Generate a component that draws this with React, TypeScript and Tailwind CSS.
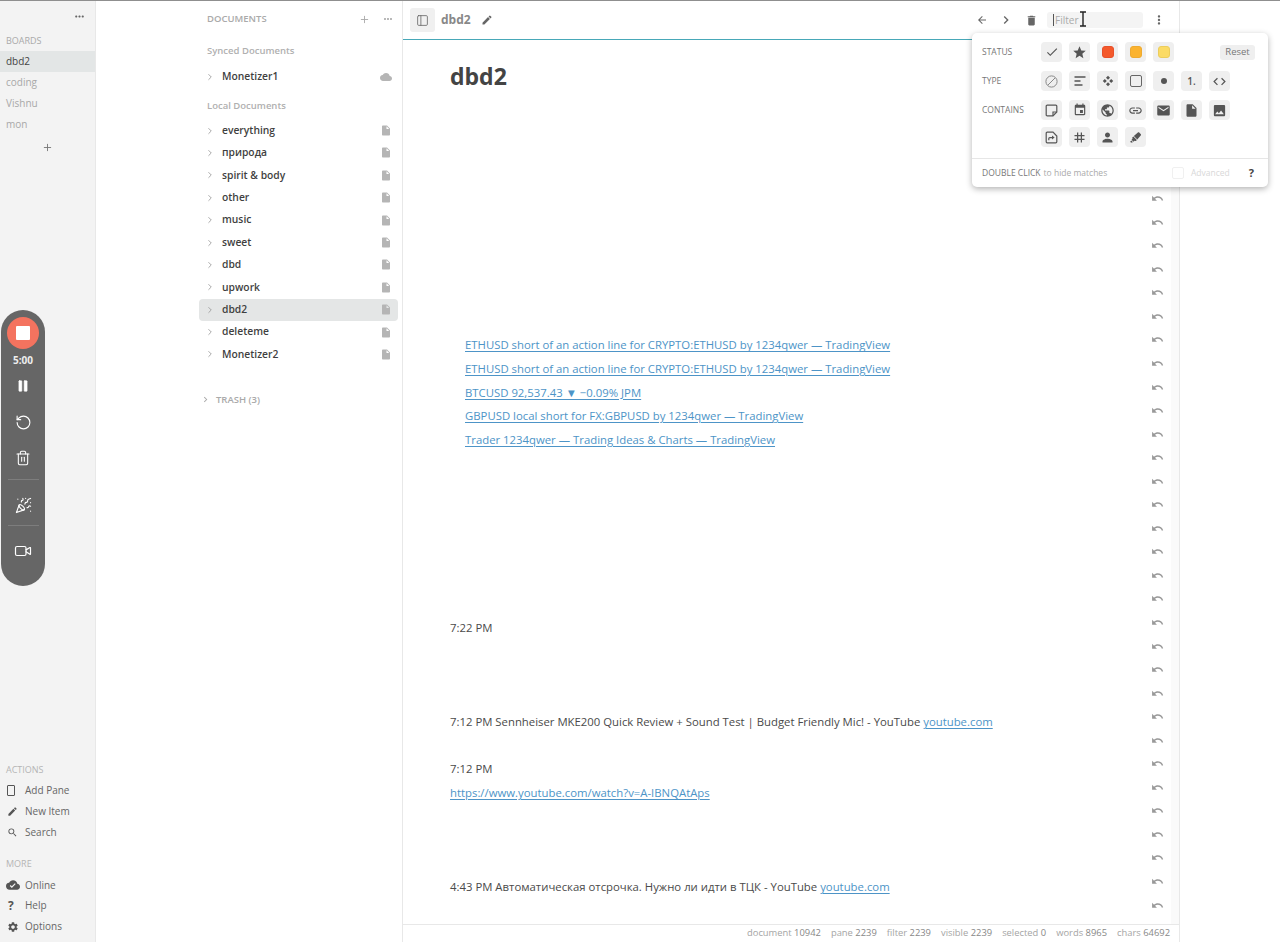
import { type FC, type ReactNode } from 'react';
import { FaHighlighter } from 'react-icons/fa';
import {
    MdCheck, MdCloud, MdCloudDone, MdCode, MdEmail, MdEvent, MdImage, MdInsertDriveFile,
    MdLink, MdMoreVert, MdMoreHoriz, MdPerson, MdPublic, MdSearch, MdSettings,
    MdStar, MdTag, MdUndo, MdEdit, MdDelete, MdChevronRight, MdArrowBack,
} from 'react-icons/md';
import { PanelLeft, Pause, PartyPopper, RotateCcw, Trash2, Video, Plus, ChevronRight } from 'lucide-react';

const boards = ['dbd2', 'coding', 'Vishnu', 'mon'];
const localDocs = ['everything', 'природа', 'spirit & body', 'other', 'music', 'sweet', 'dbd', 'upwork', 'dbd2', 'deleteme', 'Monetizer2'];

const linkClass = 'text-[#4d94c7] underline underline-offset-2';

// row index -> content, everything else is an empty line with only the undo icon
const rows: Record<number, ReactNode> = {
    9: <a className={`ml-[15px] ${linkClass}`}>ETHUSD short of an action line for CRYPTO:ETHUSD by 1234qwer — TradingView</a>,
    10: <a className={`ml-[15px] ${linkClass}`}>ETHUSD short of an action line for CRYPTO:ETHUSD by 1234qwer — TradingView</a>,
    11: <a className={`ml-[15px] ${linkClass}`}>BTCUSD 92,537.43 ▼ −0.09% JPM</a>,
    12: <a className={`ml-[15px] ${linkClass}`}>GBPUSD local short for FX:GBPUSD by 1234qwer — TradingView</a>,
    13: <a className={`ml-[15px] ${linkClass}`}>Trader 1234qwer — Trading Ideas &amp; Charts — TradingView</a>,
    21: <span>7:22 PM</span>,
    25: <span>7:12 PM Sennheiser MKE200 Quick Review + Sound Test | Budget Friendly Mic! - YouTube <a className={linkClass}>youtube.com</a></span>,
    27: <span>7:12 PM</span>,
    28: <a className={linkClass}>https://www.youtube.com/watch?v=A-IBNQAtAps</a>,
    32: <span>4:43 PM Автоматическая отсрочка. Нужно ли идти в ТЦК - YouTube <a className={linkClass}>youtube.com</a></span>,
};

const stats: [string, string][] = [
    ['document', '10942'], ['pane', '2239'], ['filter', '2239'], ['visible', '2239'],
    ['selected', '0'], ['words', '8965'], ['chars', '64692'],
];

const SideLink: FC<{ icon: ReactNode; label: string }> = ({ icon, label }) => (
    <div className="h-[20.8px] flex items-center text-[10px] text-[#666]">
        <span className="w-[25px] pl-[7px] flex items-center text-[#555]">{icon}</span>
        <span>{label}</span>
    </div>
);

const DocRow: FC<{ name: string; active?: boolean; icon?: ReactNode }> = ({ name, active, icon }) => (
    <div className={`h-[22.4px] flex items-center rounded-sm ${active ? 'bg-[#e4e6e6]' : ''}`}>
        <ChevronRight size={10} className="ml-[6px] text-[#999]" />
        <span className="ml-[7px] flex-1 text-[10.3px] font-semibold text-[#3f3f3f]">{name}</span>
        <span className="mr-[6px] w-[12px] flex justify-center text-[#b5b5b5]">{icon ?? <MdInsertDriveFile size={13} />}</span>
    </div>
);

const Chip: FC<{ children: ReactNode }> = ({ children }) => (
    <div className="w-[21px] h-[20px] rounded-[4px] bg-[#efefef] flex items-center justify-center text-[#555]">{children}</div>
);

const Swatch: FC<{ className: string }> = ({ className }) => <span className={`w-[12px] h-[12px] rounded-[3px] border ${className}`}></span>;

const FilterPopover: FC = () => (
    <div className="absolute left-[972px] top-[33px] w-[296px] h-[154px] bg-white rounded-[5px] shadow-[0_2px_6px_rgba(0,0,0,0.3)] flex flex-col z-10">
        <div className="flex-1 pl-[10px] pr-[13px] pt-[9px] text-[8.5px] text-[#777] flex flex-col">
            <div className="flex items-center h-[20px]">
                <span className="w-[59px]">STATUS</span>
                <div className="flex gap-[7px] flex-1">
                    <Chip><MdCheck size={14} /></Chip>
                    <Chip><MdStar size={15} /></Chip>
                    <Chip><Swatch className="bg-[#f4592b] border-[#e8502a]" /></Chip>
                    <Chip><Swatch className="bg-[#fbb32f] border-[#eeaa30]" /></Chip>
                    <Chip><Swatch className="bg-[#fbdb65] border-[#eccd5c]" /></Chip>
                </div>
                <span className="w-[35px] h-[15px] rounded-[3px] bg-[#efefef] flex items-center justify-center text-[9.5px]">Reset</span>
            </div>
            <div className="flex items-center h-[20px] mt-[9px]">
                <span className="w-[59px]">TYPE</span>
                <div className="flex gap-[7px]">
                    <Chip>
                        <svg width="13" height="13" viewBox="0 0 13 13" fill="none" stroke="#888" strokeWidth="1">
                            <circle cx="6.5" cy="6.5" r="5.6" />
                            <path d="M3 10 10 3" />
                        </svg>
                    </Chip>
                    <Chip>
                        <svg width="12" height="10" viewBox="0 0 12 10" fill="none" stroke="currentColor" strokeWidth="1.3">
                            <path d="M.5 1h11M.5 5h6M.5 9h8" />
                        </svg>
                    </Chip>
                    <Chip>
                        <svg width="12" height="12" viewBox="0 0 12 12" fill="currentColor">
                            <path d="M6 .8 8 2.8 6 4.8 4 2.8ZM2.8 4 4.8 6 2.8 8 .8 6ZM9.2 4 11.2 6 9.2 8 7.2 6ZM6 7.2 8 9.2 6 11.2 4 9.2Z" />
                        </svg>
                    </Chip>
                    <Chip><span className="w-[12px] h-[12px] rounded-[2px] border border-[#666]"></span></Chip>
                    <Chip><span className="w-[6px] h-[6px] rounded-full bg-[#555]"></span></Chip>
                    <Chip><span className="text-[10px] font-semibold">1.</span></Chip>
                    <Chip><MdCode size={15} /></Chip>
                </div>
            </div>
            <div className="flex items-center h-[20px] mt-[9px]">
                <span className="w-[59px]">CONTAINS</span>
                <div className="flex gap-[7px]">
                    <Chip>
                        <svg width="13" height="13" viewBox="0 0 13 13" fill="none" stroke="currentColor" strokeWidth="1.2">
                            <path d="M8 11.9H2.2a1 1 0 0 1-1-1V2.1a1 1 0 0 1 1-1h8.6a1 1 0 0 1 1 1v5.8Z" />
                            <path d="M8 11.9V8h3.8" />
                        </svg>
                    </Chip>
                    <Chip><MdEvent size={14} /></Chip>
                    <Chip><MdPublic size={15} /></Chip>
                    <Chip><MdLink size={15} /></Chip>
                    <Chip><MdEmail size={15} /></Chip>
                    <Chip><MdInsertDriveFile size={15} /></Chip>
                    <Chip><MdImage size={15} /></Chip>
                </div>
            </div>
            <div className="flex items-center h-[20px] mt-[7px] pl-[59px]">
                <div className="flex gap-[7px]">
                    <Chip>
                        <svg width="13" height="13" viewBox="0 0 13 13" fill="none" stroke="currentColor" strokeWidth="1.2">
                            <path d="M8 1.2H2.2a1 1 0 0 0-1 1v8.6a1 1 0 0 0 1 1h8.6a1 1 0 0 0 1-1V5Z" />
                            <path d="M3.8 9.2V7.6c0-.6.4-1 1-1H8" />
                            <path d="M7 4.6 9.6 6.6 7 8.6Z" fill="currentColor" stroke="none" />
                        </svg>
                    </Chip>
                    <Chip><MdTag size={15} /></Chip>
                    <Chip><MdPerson size={15} /></Chip>
                    <Chip><FaHighlighter size={11} /></Chip>
                </div>
            </div>
        </div>
        <div className="h-[29px] border-t border-[#e6e6e6] pl-[10px] pr-[14px] flex items-center text-[8.5px]">
            <span className="text-[#777]">DOUBLE CLICK</span>
            <span className="ml-[3px] text-[#aaa]">to hide matches</span>
            <span className="ml-auto w-[12px] h-[12px] rounded-[2px] border border-[#f0f0f0]"></span>
            <span className="ml-[7px] text-[#d8d8d8]">Advanced</span>
            <span className="ml-[19px] text-[11px] font-bold text-[#444]">?</span>
        </div>
    </div>
);

const Recorder: FC = () => (
    <div className="absolute left-[1px] top-[310px] w-[44px] h-[276px] rounded-full bg-[#666666] flex flex-col items-center text-white z-10">
        <div className="mt-[7px] w-[32px] h-[32px] rounded-full bg-[#f4735f] flex items-center justify-center">
            <span className="w-[14px] h-[14px] rounded-[1px] bg-white"></span>
        </div>
        <span className="mt-[4px] text-[10px] font-bold leading-[14px] text-[#eee]">5:00</span>
        <Pause size={14} fill="currentColor" strokeWidth={1} className="mt-[12px]" />
        <RotateCcw size={17} className="mt-[21px]" strokeWidth={1.6} />
        <Trash2 size={16} className="mt-[19px]" strokeWidth={1.6} />
        <span className="mt-[13px] w-[31px] h-px bg-[#7d7d7d]"></span>
        <PartyPopper size={17} className="mt-[17px]" strokeWidth={1.6} />
        <span className="mt-[11px] w-[31px] h-px bg-[#7d7d7d]"></span>
        <Video size={18} className="mt-[16px]" strokeWidth={1.6} />
    </div>
);

export default function App() {
    return (
        <div className="relative h-screen w-full overflow-hidden bg-white flex flex-col font-['Open_Sans',sans-serif]">
            <div className="h-px bg-[#8f8f8f] shrink-0"></div>
            <div className="flex-1 flex min-h-0">
                {/* Boards sidebar */}
                <aside className="w-[96px] shrink-0 bg-[#f3f3f3] border-r border-[#e8e8e8] flex flex-col">
                    <div className="h-[30px] flex items-center justify-end pr-[9px] text-[#666]"><MdMoreHoriz size={13} /></div>
                    <div className="pl-[6px] mt-[1px] h-[17px] flex items-center text-[9px] text-[#aaa]">BOARDS</div>
                    <div className="mt-[2px]">
                        {boards.map((b, i) => (
                            <div key={b} className={`h-[21px] pl-[6px] flex items-center text-[10px] ${i === 0 ? 'bg-[#e3e6e6] text-[#444]' : 'text-[#a8a8a8]'}`}>{b}</div>
                        ))}
                    </div>
                    <div className="mt-[7px] flex justify-center text-[#777]"><Plus size={11} /></div>
                    <div className="mt-auto mb-[5px]">
                        <div className="pl-[6px] h-[16px] flex items-center text-[9px] text-[#b5b5b5]">ACTIONS</div>
                        <div className="mt-[2px]">
                            <SideLink icon={<span className="w-[8px] h-[11px] border border-[#555] rounded-[1px]"></span>} label="Add Pane" />
                            <SideLink icon={<MdEdit size={11} />} label="New Item" />
                            <SideLink icon={<MdSearch size={11} />} label="Search" />
                        </div>
                        <div className="pl-[6px] h-[16px] mt-[13px] flex items-center text-[9px] text-[#b5b5b5]">MORE</div>
                        <div className="mt-[3px]">
                            <SideLink icon={<MdCloudDone size={14} className="-ml-[1px]" />} label="Online" />
                            <SideLink icon={<span className="text-[12px] font-bold leading-none pl-[1px]">?</span>} label="Help" />
                            <SideLink icon={<MdSettings size={12} />} label="Options" />
                        </div>
                    </div>
                </aside>

                {/* Documents panel */}
                <aside className="w-[307px] shrink-0 border-r border-[#e8e8e8] pl-[103px] pr-[4px]">
                    <div className="h-[36px] pl-[8px] flex items-center text-[#aaa]">
                        <span className="flex-1 text-[9.5px] font-semibold">DOCUMENTS</span>
                        <Plus size={11} />
                        <MdMoreHoriz size={12} className="ml-[12px] mr-[4px]" />
                    </div>
                    <div className="h-[28px] pl-[8px] flex items-center text-[9.5px] font-semibold text-[#b0b0b0]">Synced Documents</div>
                    <div className="mt-[1px]">
                        <DocRow name="Monetizer1" icon={<MdCloud size={14} />} />
                    </div>
                    <div className="h-[26px] mt-[5px] pl-[8px] flex items-center text-[9.5px] font-semibold text-[#b0b0b0]">Local Documents</div>
                    <div>
                        {localDocs.map(d => <DocRow key={d} name={d} active={d === 'dbd2'} />)}
                    </div>
                    <div className="mt-[24px] h-[20px] flex items-center text-[9.5px] text-[#aaa]">
                        <MdChevronRight size={11} className="ml-[1px]" />
                        <span className="ml-[5px] font-semibold">TRASH (3)</span>
                    </div>
                </aside>

                {/* Main pane */}
                <main className="w-[777px] shrink-0 border-r border-[#e8e8e8] flex flex-col min-h-0">
                    <header className="h-[39px] shrink-0 border-b border-[#47a8b8] flex items-center pl-[7px] pr-[13px] text-[#666]">
                        <div className="w-[25px] h-[24px] rounded-[3px] bg-[#f0f0f0] flex items-center justify-center"><PanelLeft size={13} strokeWidth={1.5} /></div>
                        <span className="ml-[6px] text-[12px] font-bold text-[#888]">dbd2</span>
                        <MdEdit size={12} className="ml-[10px]" />
                        <MdArrowBack size={12} className="ml-auto" />
                        <MdChevronRight size={16} className="ml-[10px]" />
                        <MdDelete size={13} className="ml-[11px]" />
                        <div className="ml-[9px] w-[96px] h-[16px] rounded-[3px] bg-[#f4f4f4] flex items-center pl-[6px] text-[10px] text-[#aaa]">
                            <span className="border-l border-[#555] pl-[1px] leading-[12px]">Filter</span>
                        </div>
                        <MdMoreVert size={14} className="ml-[9px]" />
                    </header>
                    <div className="flex-1 flex min-h-0">
                        <div className="flex-1 overflow-hidden pl-[47px] pr-[7px] text-[#4a4a4a] text-[11.35px]">
                            <h1 className="h-[80.5px] pt-[18px] text-[23px] leading-[36px] font-bold text-[#444]">dbd2</h1>
                            {Array.from({ length: 35 }, (_, i) => (
                                <div key={i} className="h-[23.56px] flex justify-between items-start leading-[25.5px] whitespace-nowrap">
                                    <div>{rows[i]}</div>
                                    <MdUndo size={13} className="mt-[1px] text-[#999] shrink-0" />
                                </div>
                            ))}
                        </div>
                        <div className="w-[8px] shrink-0 bg-[#fafafa]"></div>
                    </div>
                    <footer className="h-[18px] shrink-0 border-t border-[#e8e8e8] bg-white flex items-center justify-end gap-[10px] pr-[9px] text-[9.4px] text-[#a5a5a5]">
                        {stats.map(([k, v]) => (
                            <span key={k}>{k} <span className="text-[#888]">{v}</span></span>
                        ))}
                    </footer>
                </main>
                <div className="flex-1"></div>
            </div>

            <FilterPopover />
            <Recorder />

            {/* text cursor caught in the shot */}
            <svg className="absolute left-[1079px] top-[11px] z-20" width="8" height="16" viewBox="0 0 8 16" fill="none" stroke="#222" strokeWidth="1.4">
                <path d="M1 1h6M4 1v14M1 15h6" />
            </svg>
        </div>
    );
}
